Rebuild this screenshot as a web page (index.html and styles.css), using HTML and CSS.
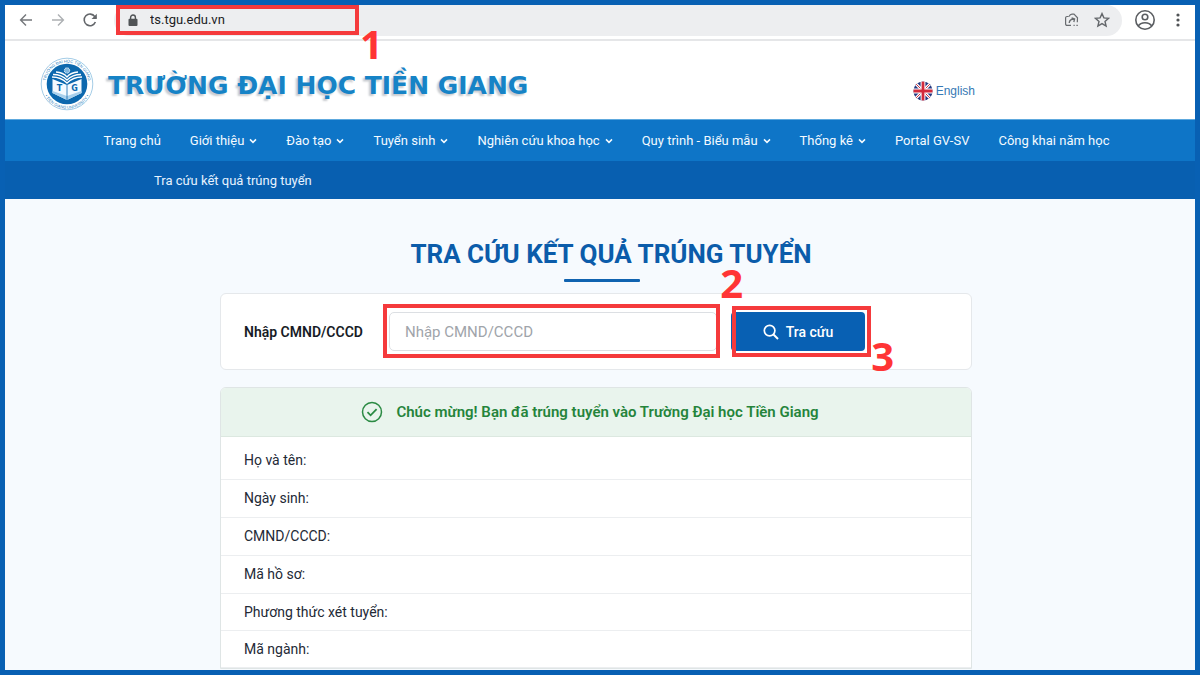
FILE: index.html
```html
<!DOCTYPE html>
<html lang="vi">
<head>
<meta charset="utf-8">
<meta name="viewport" content="width=device-width, initial-scale=1">
<title>Tra cứu kết quả trúng tuyển</title>
<link rel="stylesheet" href="styles.css">
</head>
<body>
<svg class="defs" width="0" height="0" aria-hidden="true">
  <symbol id="chevron" viewBox="0 0 8 8"><path d="M1 2.400 4 5.400 7 2.400" fill="none" stroke="currentColor" stroke-width="1.500"/></symbol>
</svg>
<div class="frame">
  <div class="toolbar">
    <button class="tool" aria-label="Back"><svg width="16" height="16" viewBox="0 0 16 16"><path d="M14 8H3M8 2.6 2.6 8 8 13.4" fill="none" stroke="#74777b" stroke-width="1.4"/></svg></button>
    <button class="tool" aria-label="Forward"><svg width="16" height="16" viewBox="0 0 16 16"><path d="M2 8h11M8 2.6 13.4 8 8 13.4" fill="none" stroke="#adb0b3" stroke-width="1.4"/></svg></button>
    <button class="tool" aria-label="Reload"><svg width="16" height="16" viewBox="0 0 16 16"><path d="M13.400 10a5.8 5.8 0 1 1-.6-5.4L14 6" fill="none" stroke="#63666a" stroke-width="1.6"/><path d="M14.8 1.8v5.200H9.600z" fill="#63666a"/></svg></button>
    <div class="omnibox">
      <div class="address">
        <svg width="10" height="13" viewBox="0 0 10 13"><path d="M2.6 5.5V3.4a2.4 2.4 0 0 1 4.8 0v2.1" fill="none" stroke="#505356" stroke-width="1.4"/><rect x=".5" y="4.8" width="9" height="7.2" rx="1" fill="#505356"/></svg>
        <input class="url" type="text" value="ts.tgu.edu.vn" aria-label="Address">
        <span class="mark mark-url"></span><span class="step step-1">1</span>
      </div>
      <button class="tool" aria-label="Share"><svg width="16" height="16" viewBox="0 0 16 16"><path d="M4.500 4.500H3A1.400 1.400 0 0 0 1.600 5.900V12A1.400 1.400 0 0 0 3 13.400h4M5 4.500c.7-1.500 1.700-2.300 3-2.300h2l3.500 3.600-.2 4.400M9.500 13.400h1.200M12.400 13.300h1.400" fill="none" stroke="#686b6f" stroke-width="1.200"/><path d="M5.200 11c.2-2.600 2-4 5-4M7.600 5.900l3 1.100-.8 3" fill="none" stroke="#686b6f" stroke-width="1.300"/></svg></button>
      <button class="tool" aria-label="Bookmark"><svg width="16" height="16" viewBox="0 0 16 16"><path d="m8 1.6 1.9 4.3 4.7.4L11 9.4l1.1 4.6L8 11.6 3.9 14 5 9.4 1.400 6.300l4.700-.4z" fill="none" stroke="#63666a" stroke-width="1.4"/></svg></button>
    </div>
    <button class="tool" aria-label="Profile"><svg width="22" height="22" viewBox="0 0 22 22"><g fill="none" stroke="#5a5d61" stroke-width="1.6"><circle cx="11" cy="11" r="9.200"/><circle cx="11" cy="8" r="2.800"/><path d="M4.300 17c1.300-2.300 4-3.300 6.700-3.300s5.400 1 6.700 3.300"/></g></svg></button>
    <button class="tool" aria-label="Menu"><svg width="16" height="16" viewBox="0 0 16 16" fill="#505356"><circle cx="8" cy="3" r="1.600"/><circle cx="8" cy="8" r="1.600"/><circle cx="8" cy="13" r="1.600"/></svg></button>
  </div>

  <header class="masthead">
    <a class="brand" href="#">
      <svg width="54" height="54" viewBox="0 0 54 54" aria-hidden="true">
        <defs><path id="ring-top" d="M5.500 27a21.500 21.500 0 0 1 43 0"/><path id="ring-bottom" d="M2.200 27a24.800 24.800 0 0 0 49.600 0"/></defs>
        <circle cx="27" cy="27" r="25.800" fill="#fff" stroke="#8dbfe0" stroke-width=".8"/>
        <circle cx="27" cy="27" r="20.300" fill="#0c68ae"/>
        <g class="seal-text"><text><textPath href="#ring-top" startOffset="50%" text-anchor="middle">TRƯỜNG ĐẠI HỌC TIỀN GIANG</textPath></text><text><textPath href="#ring-bottom" startOffset="50%" text-anchor="middle">• TIEN GIANG UNIVERSITY •</textPath></text></g>
        <path d="M12.500 22 27 28v15l-14.500-7zM41.500 22 27 28v15l14.500-7z" fill="#f4faff"/>
        <path d="M12.500 34 27 39v4l-14.500-7zM41.500 34 27 39v4l14.500-7z" fill="#a9d0ec"/>
        <path d="M27 28v15" stroke="#0c68ae" stroke-width=".8"/>
        <path d="M12 20c6 0 11 2 15 6 4-4 9-6 15-6M13 17.500c6 0 10.500 2 14 5.500 3.500-3.500 8-5.500 14-5.500M16 15c5 .3 8.500 2 11 5 2.500-3 6-4.700 11-5" fill="none" stroke="#fff" stroke-width="1.300"/>
        <circle cx="27" cy="13.500" r="2.700" fill="#7fb6de" stroke="#fff" stroke-width="1" stroke-dasharray="1 .7"/>
        <g class="seal-letter"><text x="19.500" y="34" text-anchor="middle">T</text><text x="34.500" y="34" text-anchor="middle">G</text></g>
      </svg>
      <span class="brand-name">TRƯỜNG ĐẠI HỌC TIỀN GIANG</span>
    </a>
    <a class="language" href="#">
      <svg width="20" height="20" viewBox="0 0 20 20" aria-hidden="true"><clipPath id="disc"><circle cx="10" cy="10" r="9.600"/></clipPath><g clip-path="url(#disc)"><path fill="#273b82" d="M0 0h20v20H0z"/><path d="m0 0 20 20M20 0 0 20" stroke="#fff" stroke-width="3"/><path d="m0 0 20 20M20 0 0 20" stroke="#cc3545" stroke-width="1"/><path d="M10 0v20M0 10h20" stroke="#fff" stroke-width="4.800"/><path d="M10 0v20M0 10h20" stroke="#d32a3c" stroke-width="2.800"/></g></svg>
      <span>English</span>
    </a>
  </header>

  <nav class="nav">
    <a href="#">Trang chủ</a>
    <a href="#">Giới thiệu <svg><use href="#chevron"/></svg></a>
    <a href="#">Đào tạo <svg><use href="#chevron"/></svg></a>
    <a href="#">Tuyển sinh <svg><use href="#chevron"/></svg></a>
    <a href="#">Nghiên cứu khoa học <svg><use href="#chevron"/></svg></a>
    <a href="#">Quy trình - Biểu mẫu <svg><use href="#chevron"/></svg></a>
    <a href="#">Thống kê <svg><use href="#chevron"/></svg></a>
    <a href="#">Portal GV-SV</a>
    <a href="#">Công khai năm học</a>
  </nav>
  <div class="subnav"><a href="#">Tra cứu kết quả trúng tuyển</a></div>

  <main class="main">
    <div class="content">
      <h1 class="title">TRA CỨU KẾT QUẢ TRÚNG TUYỂN</h1>
      <div class="rule"></div>
      <form class="search">
        <label class="search-label" for="cccd">Nhập CMND/CCCD</label>
        <div class="field">
          <input class="search-input" id="cccd" type="text" placeholder="Nhập CMND/CCCD">
          <span class="mark mark-field"></span><span class="step step-2">2</span>
        </div>
        <div class="action">
          <button class="search-button" type="button"><svg width="16" height="16" viewBox="0 0 16 16"><circle cx="6.600" cy="6.600" r="5.300" fill="none" stroke="#fff" stroke-width="1.700"/><path d="m10.500 10.500 4.500 4.500" stroke="#fff" stroke-width="1.900"/></svg>Tra cứu</button>
          <span class="mark mark-button"></span><span class="step step-3">3</span>
        </div>
      </form>
      <section class="result">
        <div class="notice"><svg width="22" height="22" viewBox="0 0 22 22"><g fill="none" stroke="#2a8a43"><circle cx="11" cy="11" r="9.500" stroke-width="1.500"/><path d="m6.500 11.200 3.100 3.100 6-6.200" stroke-width="1.800"/></g></svg><span>Chúc mừng! Bạn đã trúng tuyển vào Trường Đại học Tiền Giang</span></div>
        <table class="details">
          <tbody>
            <tr><th scope="row">Họ và tên:</th><td></td></tr>
            <tr><th scope="row">Ngày sinh:</th><td></td></tr>
            <tr><th scope="row">CMND/CCCD:</th><td></td></tr>
            <tr><th scope="row">Mã hồ sơ:</th><td></td></tr>
            <tr><th scope="row">Phương thức xét tuyển:</th><td></td></tr>
            <tr><th scope="row">Mã ngành:</th><td></td></tr>
          </tbody>
        </table>
      </section>
    </div>
  </main>
</div>
</body>
</html>
```
FILE: styles.css
```css
* { box-sizing: border-box; }
body { margin: 0; font-family: Roboto, "Noto Sans", sans-serif; font-size: 14px; color: #232936; }
a { color: inherit; text-decoration: none; }
button { font: inherit; border: 0; padding: 0; background: none; }
svg { display: block; flex: none; }
.defs { position: absolute; }
.frame { height: 100vh; border: 5px solid #0860b3; overflow: hidden; display: flex; flex-direction: column; background: #f6fafe; }

.toolbar { display: flex; align-items: center; flex: none; height: 36px; padding: 0 9px 4px 13px; gap: 16px; background: #fff; border-bottom: 2px solid #e5e6e8; }
.omnibox { flex: 1; display: flex; align-items: center; gap: 14px; height: 31px; padding-right: 12px; margin-right: -4px; background: #edeef0; border-radius: 16px; }
.toolbar > .tool:last-child { margin-left: -2px; }
.address { position: relative; display: flex; align-items: center; gap: 12px; flex: 1; padding-left: 14px; }
.url { width: 200px; padding: 0; border: 0; outline: 0; background: none; font-family: inherit; font-size: 13px; line-height: 20px; color: #202124; }

.mark { position: absolute; border: 4px solid #f53a3c; pointer-events: none; }
.step { position: absolute; font-family: "Open Sans", sans-serif; font-weight: 700; font-size: 40px; line-height: 40px; color: #ff3535; }
.mark-url { left: 2px; top: -5px; width: 243px; height: 30px; }
.step-1 { left: 246px; top: 14px; }
.mark-field { inset: -8px -3px -7px -6px; }
.step-2 { right: -26px; top: -49px; }
.mark-button { inset: -6px -6px -6px 1px; }
.step-3 { right: -29px; bottom: -25px; }

.masthead { display: flex; align-items: center; justify-content: space-between; flex: none; height: 78px; padding: 8px 220px 0 35px; background: #fff; }
.brand { display: flex; align-items: center; gap: 14px; }
.brand-name { padding-top: 4px; font-family: "DejaVu Sans", sans-serif; font-weight: 700; font-size: 25px; line-height: 36px; color: #1683c6; text-shadow: -2px 2px 2px #c9ccd0; white-space: nowrap; }
.seal-text { font-family: "Liberation Sans", sans-serif; font-size: 4px; fill: #2b80bd; }
.seal-letter { font-family: "DejaVu Sans", sans-serif; font-weight: 700; font-size: 8px; fill: #0c68ae; }
.language { display: flex; align-items: center; gap: 3px; padding-top: 14px; font-family: "Liberation Sans", sans-serif; font-size: 12px; color: #3679b5; }

.nav { display: flex; justify-content: center; align-items: center; flex: none; gap: 29px; height: 42px; padding-left: 13px; background: #0e75c7; color: #f3faff; border-top: 1px solid #5ea9de; font-size: 13px; white-space: nowrap; }
.nav a { display: flex; align-items: center; gap: 5px; }
.nav svg { width: 8px; height: 8px; }
.subnav { display: flex; align-items: center; flex: none; height: 38px; padding-left: 149px; background: #085fb0; color: #e6f2ff; font-size: 13px; }

.main { flex: 1; min-height: 0; padding: 36px 8px 0 0; }
.content { max-width: 752px; margin: 0 auto; }
.title { margin: 0; padding-left: 30px; text-align: center; font-size: 26px; line-height: 38px; font-weight: 700; color: #0b5caa; white-space: nowrap; }
.rule { width: 76px; height: 3px; margin: 6px auto 11px calc(50% - 32px); background: #1063b0; border-radius: 1px; }

.search { display: flex; align-items: center; height: 77px; padding: 0 106px 0 23px; background: #fff; border: 1px solid #e5e8eb; border-radius: 6px; }
.search-label { width: 145px; font-weight: 600; font-size: 14px; color: #171b26; white-space: nowrap; }
.field { position: relative; flex: 1; }
.search-input { display: block; width: 100%; height: 39px; padding: 0 15px; border: 1px solid #dcdfe3; border-radius: 5px; background: #fff; font-family: inherit; font-size: 15px; }
.search-input::placeholder { color: #a0a4aa; }
.action { position: relative; margin-left: 14px; }
.search-button { display: flex; align-items: center; justify-content: center; gap: 7px; width: 134px; height: 39px; border-radius: 4px; background: #0860b3; color: #fff; font-weight: 500; font-size: 14px; }

.result { margin-top: 17px; background: #fff; border: 1px solid #dfe5e5; border-radius: 6px 6px 0 0; }
.notice { display: flex; align-items: center; justify-content: center; gap: 13px; height: 49px; padding-right: 12px; background: #e9f4ed; border-bottom: 1px solid #dce8e0; border-radius: 5px 5px 0 0; color: #25843b; font-weight: 600; font-size: 15px; }
.details { width: 100%; border-collapse: collapse; }
.details th { height: 38px; padding: 0 23px; text-align: left; font-weight: 400; }
.details tr { border-bottom: 1px solid #eceef0; }
.details tr:first-child th { height: 42px; padding-top: 4px; }
.details tr:nth-child(n+5) th { height: 37px; }
```
